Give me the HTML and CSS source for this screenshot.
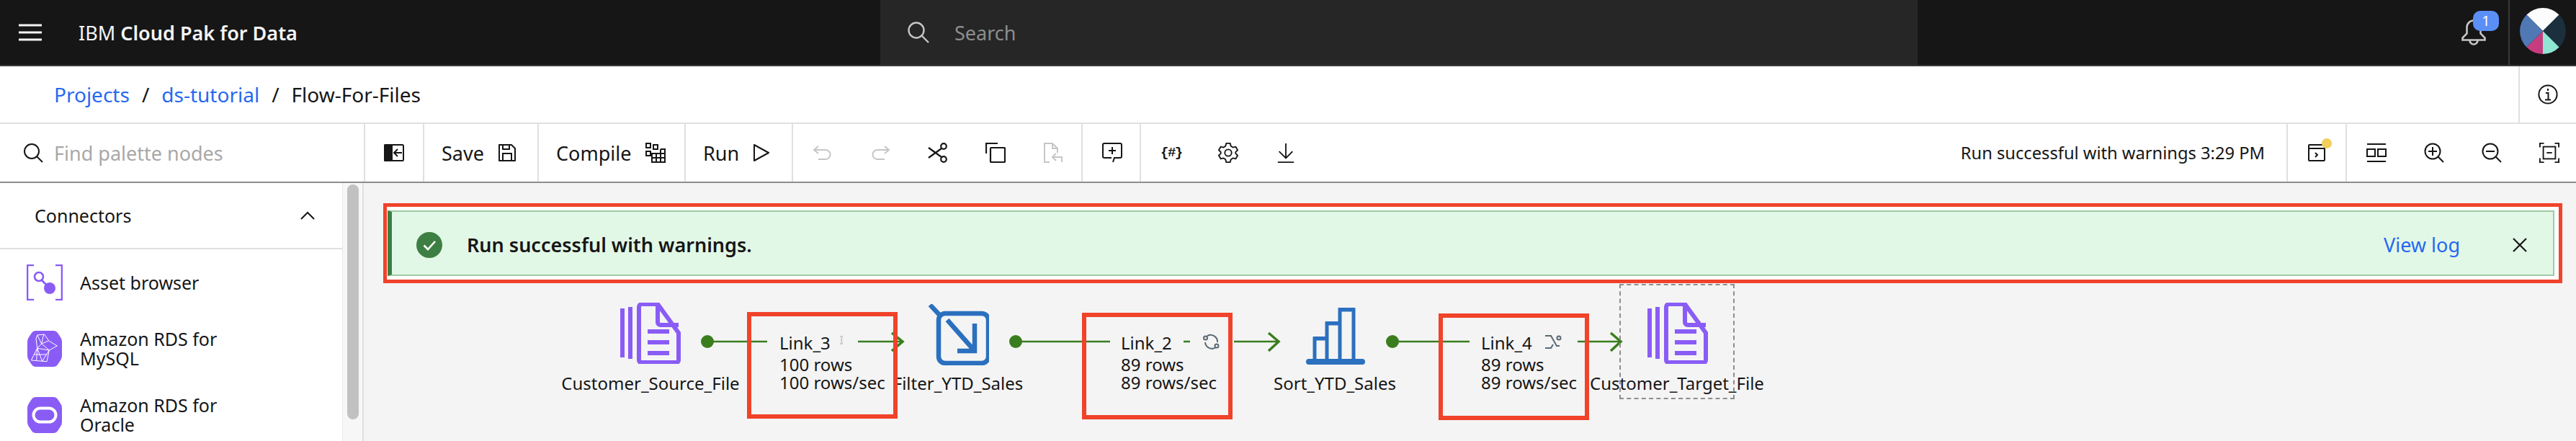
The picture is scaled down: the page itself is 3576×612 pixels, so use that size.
FILE: index.html
```html
<!DOCTYPE html>
<html lang="en">
<head>
  <meta charset="UTF-8" />
  <title>Flow-For-Files</title>
  <link rel="stylesheet" href="styles.css">
</head>
<body>
  <header class="topbar">
    <div class="brand">
      <svg class="menu-icon" viewBox="0 0 32 24"><path d="M0 2h32M0 12h32M0 22h32" stroke="#f4f4f4" stroke-width="3" fill="none"/></svg>
      <span class="brand-name">IBM <strong>Cloud Pak for Data</strong></span>
    </div>
    <div class="search">
      <svg class="search-icon" viewBox="0 0 32 32"><circle cx="13" cy="13" r="10.5" fill="none" stroke="#c6c6c6" stroke-width="2.4"/><path d="M21 21l9 9" stroke="#c6c6c6" stroke-width="2.4"/></svg>
      <span>Search</span>
    </div>
    <div class="top-right">
      <div class="bell">
        <svg class="bell-icon" viewBox="0 0 34 36"><path d="M1.500 28.500h31v-3l-6-6V11a9.500 9.500 0 0 0-19 0v8.500l-6 6z" fill="none" stroke="#c6c6c6" stroke-width="2.6"/><path d="M11.500 29a5.500 5.500 0 0 0 11 0" fill="none" stroke="#c6c6c6" stroke-width="2.6"/></svg>
        <span class="badge">1</span>
      </div>
      <div class="avatar-cell">
        <svg class="avatar" viewBox="-32 -32 64 64">
          <path d="M0 0L-22.600-22.600A32 32 0 0 1 22.600-22.600z" fill="#fcfcfc"/>
          <path d="M0 0L22.600-22.600A32 32 0 0 1 22.600 22.600z" fill="#1b2f3d"/>
          <path d="M0 0L22.600 22.600A32 32 0 0 1 0 32z" fill="#8fe6d2"/>
          <path d="M0 0L0 32A32 32 0 0 1-22.600 22.600z" fill="#c63d7f"/>
          <path d="M0 0L-22.600 22.600A32 32 0 0 1-22.600-22.600z" fill="#4f78b5"/>
        </svg>
      </div>
    </div>
  </header>

  <nav class="crumbs">
    <div class="crumb-list">
      <a>Projects</a><span class="slash">/</span><a>ds-tutorial</a><span class="slash">/</span><span>Flow-For-Files</span>
    </div>
    <div class="crumb-info">
      <svg class="icon" viewBox="0 0 28 28"><circle cx="14" cy="14" r="12.6" fill="none" stroke="#161616" stroke-width="2"/><path d="M14 6v3M11 12h3.500v9M10 21.500h8" fill="none" stroke="#161616" stroke-width="2"/></svg>
    </div>
  </nav>

  <div class="toolbar">
    <div class="find">
      <svg class="find-icon" viewBox="0 0 28 28"><circle cx="12" cy="12" r="10" fill="none" stroke="#161616" stroke-width="2"/><path d="M19 19l8 8" stroke="#161616" stroke-width="2"/></svg>
      <span>Find palette nodes</span>
    </div>
    <div class="tool-group toggle">
      <svg class="icon" viewBox="0 0 28 24"><rect x="1" y="1" width="26" height="22" rx="1.500" fill="none" stroke="#161616" stroke-width="2"/><rect x="0" y="0" width="12" height="24" rx="1.500" fill="#161616"/><path d="M25 12H15M19 7l-5 5 5 5" fill="none" stroke="#161616" stroke-width="2"/></svg>
    </div>
    <div class="tool-group labeled save">
      <span>Save</span>
      <svg class="icon" viewBox="0 0 24 24"><path d="M1 1h17l5 5v17H1z" fill="none" stroke="#161616" stroke-width="2" stroke-linejoin="round"/><path d="M6 23V13h12v10M6 1v6h9V1" fill="none" stroke="#161616" stroke-width="2"/></svg>
    </div>
    <div class="tool-group labeled compile">
      <span>Compile</span>
      <svg class="icon" viewBox="0 0 28 28"><g fill="none" stroke="#161616" stroke-width="2"><rect x="1" y="1" width="6" height="6"/><rect x="11" y="3" width="6" height="6"/><rect x="1" y="12" width="6" height="6"/><path d="M9 15h18v12H9zM9 21h18M15 15v12M21 9v18M21 9h6v6"/></g></svg>
    </div>
    <div class="tool-group labeled run">
      <span>Run</span>
      <svg class="icon" viewBox="0 0 22 24"><path d="M1 1l20 11L1 23z" fill="none" stroke="#161616" stroke-width="2" stroke-linejoin="round"/></svg>
    </div>
    <div class="tool-group icons edit">
      <svg class="icon muted" viewBox="0 0 28 24"><path d="M8 3L2 8l6 5" fill="none" stroke="#c6c6c6" stroke-width="2"/><path d="M2 8h16a6 6 0 0 1 0 13H8" fill="none" stroke="#c6c6c6" stroke-width="2"/></svg>
      <svg class="icon muted" viewBox="0 0 28 24"><path d="M20 3l6 5-6 5" fill="none" stroke="#c6c6c6" stroke-width="2"/><path d="M26 8H10a6 6 0 0 0 0 13h10" fill="none" stroke="#c6c6c6" stroke-width="2"/></svg>
      <svg class="icon" viewBox="0 0 28 28"><g fill="none" stroke="#161616" stroke-width="2.200"><circle cx="22" cy="5" r="3.800"/><circle cx="22" cy="23" r="3.800"/><path d="M19 8L1 21M19 20L1 7"/></g></svg>
      <svg class="icon" viewBox="0 0 28 28"><g fill="none" stroke="#161616" stroke-width="2.200"><rect x="7" y="7" width="20" height="20" rx="1"/><path d="M1 15V1h16"/></g></svg>
      <svg class="icon" viewBox="0 0 26 28"><g fill="none" stroke="#c6c6c6" stroke-width="2"><path d="M8 27H1V1h11l7 7v6M12 1v7h7"/><path d="M25 27v-7H13M17 15l-5 5 5 5"/></g></svg>
    </div>
    <div class="tool-group icons comment">
      <svg class="icon" viewBox="0 0 28 28"><g fill="none" stroke="#161616" stroke-width="2"><path d="M13 21H3a2 2 0 0 1-2-2V3a2 2 0 0 1 2-2h22a2 2 0 0 1 2 2v16a2 2 0 0 1-2 2h-8l-2 6"/><path d="M14 6v10M9 11h10"/></g></svg>
    </div>
    <div class="tool-group icons params">
      <span class="hash">{#}</span>
      <svg class="icon" viewBox="0 0 30 30"><g fill="none" stroke="#161616" stroke-width="2" stroke-linejoin="round"><path d="M12 1h6l1 4 3 2 4-1 3 5-3 3v2l3 3-3 5-4-1-3 2-1 4h-6l-1-4-3-2-4 1-3-5 3-3v-2L1 11l3-5 4 1 3-2z"/><circle cx="15" cy="15" r="5"/></g></svg>
      <svg class="icon" viewBox="0 0 26 30"><path d="M13 1v21M3 13l10 10 10-10M1 29h24" fill="none" stroke="#161616" stroke-width="2"/></svg>
    </div>
    <div class="status">Run successful with warnings 3:29 PM</div>
    <div class="tool-group term">
      <svg class="icon" viewBox="0 0 24 24"><g fill="none" stroke="#161616" stroke-width="2"><rect x="1" y="1" width="22" height="22" rx="1"/><path d="M1 6h22M10 12l3 3-3 3"/></g></svg>
      <span class="dot"></span>
    </div>
    <div class="tool-group icons view">
      <svg class="icon" viewBox="0 0 28 28"><g fill="none" stroke="#161616" stroke-width="2"><path d="M1 2h26M1 26h26"/><rect x="1" y="9" width="11" height="10"/><rect x="16" y="9" width="11" height="10"/></g></svg>
      <svg class="icon" viewBox="0 0 28 28"><g fill="none" stroke="#161616" stroke-width="2"><circle cx="12" cy="12" r="10.500"/><path d="M19 19l8 8M12 6v12M6 12h12"/></g></svg>
      <svg class="icon" viewBox="0 0 28 28"><g fill="none" stroke="#161616" stroke-width="2"><circle cx="12" cy="12" r="10.500"/><path d="M19 19l8 8M6 12h12"/></g></svg>
      <svg class="icon" viewBox="0 0 30 30"><g fill="none" stroke="#161616" stroke-width="2"><path d="M1 7V1h6M23 1h6v6M29 23v6h-6M7 29H1v-6"/><rect x="6" y="6" width="18" height="18"/><path d="M11 15h8"/></g></svg>
    </div>
  </div>

  <main class="workspace">
    <aside class="palette">
      <div class="palette-list">
        <div class="palette-head">
          <span>Connectors</span>
          <svg class="chevron" viewBox="0 0 20 12"><path d="M1 11l9-9 9 9" fill="none" stroke="#161616" stroke-width="2"/></svg>
        </div>
        <div class="palette-item">
          <svg class="item-icon" viewBox="0 0 50 50"><g fill="none" stroke="#8a5cf6" stroke-width="2.600"><path d="M10 1H1v48h9M40 1h9v48h-9"/><circle cx="17" cy="17" r="6"/><path d="M21 22l8 8"/></g><circle cx="32" cy="33" r="8" fill="#8a5cf6"/></svg>
          <span>Asset browser</span>
        </div>
        <div class="palette-item">
          <svg class="item-icon" viewBox="0 0 50 50"><path d="M13 0h24q4 0 6 3l4 6q2 3 2 6v20q0 3-2 6l-4 6q-2 3-6 3H13q-4 0-6-3l-4-6q-2-3-2-6V15q0-3 2-6l4-6q2-3 6-3z" fill="#8a5cf6"/><g fill="none" stroke="#fff" stroke-width="1"><path d="M14.700 6l10-1 6 9 11.600 7-11 6-3.300 15.700L6.300 41l8.400-16.700L13 11z"/><path d="M14.700 6l6 12 3-13M20.700 18l-6 6.300 16.600 2.700M20.700 18l9.600-4M20.700 18l10.600 9M14.700 24.300l7 18M14.700 24.300l-1 17M31.300 27l-9.600 15.300M10 33l18 0"/></g></svg>
          <span>Amazon RDS for MySQL</span>
        </div>
        <div class="palette-item">
          <svg class="item-icon" viewBox="0 0 50 50"><path d="M13 0h24q4 0 6 3l4 6q2 3 2 6v20q0 3-2 6l-4 6q-2 3-6 3H13q-4 0-6-3l-4-6q-2-3-2-6V15q0-3 2-6l4-6q2-3 6-3z" fill="#8a5cf6"/><rect x="9.500" y="15.500" width="31" height="19" rx="9.500" fill="none" stroke="#fff" stroke-width="4"/></svg>
          <span>Amazon RDS for Oracle</span>
        </div>
      </div>
      <div class="scroll-track"><div class="scroll-thumb"></div></div>
    </aside>

    <section class="canvas">
      <div class="notice">
        <svg class="check" viewBox="0 0 36 36"><circle cx="18" cy="18" r="18" fill="#3d7f42"/><path d="M10.500 18.500l5.500 5.500 10-11" fill="none" stroke="#fff" stroke-width="2.600"/></svg>
        <strong class="notice-text">Run successful with warnings.</strong>
        <a class="notice-link">View log</a>
        <svg class="close" viewBox="0 0 20 20"><path d="M1 1l18 18M19 1L1 19" stroke="#161616" stroke-width="2.200"/></svg>
      </div>

      <svg class="links" width="3071" height="358" viewBox="505 254 3071 358">
        <g fill="none" stroke="#3a7d1e" stroke-width="2.500">
          <path d="M982 474h83M1191 474h60M1410 474h131M1643 474h9M1713 474h60M1933 474h107M2190 474h58"/>
        </g>
        <g fill="none" stroke="#3a7d1e" stroke-width="3.500">
          <path d="M1238 462l15 12-15 13M1761 462l14 12-14 13M2236 462l14 12-14 13"/>
        </g>
        <g fill="#3a7d1e">
          <circle cx="982" cy="474" r="9"/><circle cx="1410" cy="474" r="9"/><circle cx="1933" cy="474" r="9"/>
        </g>
        <g fill="none" stroke="#c9ced2" stroke-width="2">
          <path d="M1166 467h3l-1 5 1 5h-3"/>
        </g>
        <g fill="none" stroke="#5a6872" stroke-width="2">
          <path d="M1676 466a9.500 9.500 0 0 1 14 9M1688 482a9.500 9.500 0 0 1-15-7"/>
          <circle cx="1673.500" cy="469" r="2.500"/>
          <circle cx="1689" cy="480" r="2.500"/>
          <path d="M2145 466h8l8 14h4M2145 483h8l3-5"/>
          <circle cx="2164" cy="469" r="2.500"/>
        </g>
      </svg>

      <svg class="node-icon source" viewBox="0 0 84 85"><g fill="none" stroke="#8a5cf6" stroke-width="6"><path d="M3 8v68M14 6v72"/><path d="M26 6a4 4 0 0 1 4-4h22l29 40v38a3 3 0 0 1-3 3H29a3 3 0 0 1-3-3z"/><path d="M52 3v24a4 4 0 0 0 4 4h25M38 40h30M38 55h30M38 70h30"/></g></svg>
      <div class="node-label source-label">Customer_Source_File</div>

      <svg class="node-icon filter" viewBox="0 0 84 85"><g fill="none" stroke="#2b70bf" stroke-width="6.500"><path d="M2 1l16 17"/><rect x="14" y="13" width="69" height="69" rx="9"/><path d="M26 22l38 43M64 27v41M40 65h27"/></g></svg>
      <div class="node-label filter-label">Filter_YTD_Sales</div>

      <svg class="node-icon sort" viewBox="0 0 84 80"><g fill="none" stroke="#2b70bf" stroke-width="5"><path d="M13 74V43h17v31M30 74V22h18v52M48 74V3h19v71"/></g><g fill="#2b70bf"><rect x="11" y="40" width="21" height="5"/><rect x="28" y="19" width="22" height="5"/><rect x="46" y="0" width="23" height="5"/><rect x="1" y="71" width="82" height="8" rx="4"/></g></svg>
      <div class="node-label sort-label">Sort_YTD_Sales</div>

      <svg class="node-icon target" viewBox="0 0 84 85"><g fill="none" stroke="#8a5cf6" stroke-width="6"><path d="M3 8v68M14 6v72"/><path d="M26 6a4 4 0 0 1 4-4h22l29 40v38a3 3 0 0 1-3 3H29a3 3 0 0 1-3-3z"/><path d="M52 3v24a4 4 0 0 0 4 4h25M38 40h30M38 55h30M38 70h30"/></g></svg>
      <div class="node-label target-label">Customer_Target_File</div>
      <div class="selection"></div>

      <div class="link-info link3"><span class="link-name">Link_3</span><span>100 rows</span><span>100 rows/sec</span></div>
      <div class="link-info link2"><span class="link-name">Link_2</span><span>89 rows</span><span>89 rows/sec</span></div>
      <div class="link-info link4"><span class="link-name">Link_4</span><span>89 rows</span><span>89 rows/sec</span></div>

      <div class="mark mark3"></div>
      <div class="mark mark2"></div>
      <div class="mark mark4"></div>
    </section>
  </main>
</body>
</html>
```

FILE: styles.css
```css
* {
  box-sizing: border-box;
}

html, body {
  margin: 0;
  height: 612px;
  overflow: hidden;
}

body {
  font-family: "Noto Sans", sans-serif;
  font-size: 27px;
  color: #161616;
  background: #fff;
  display: flex;
  flex-direction: column;
}

svg {
  display: block;
}

/* top bar */
.topbar {
  height: 92px;
  flex: none;
  display: flex;
  background: #161616;
  border-bottom: 2px solid #393939;
  color: #f4f4f4;
}

.brand {
  width: 1222px;
  display: flex;
  align-items: center;
  padding-left: 26px;
}

.menu-icon {
  width: 32px;
  height: 24px;
  margin-right: 51px;
}

.brand-name strong {
  font-weight: 600;
}

.search {
  width: 1440px;
  background: #262626;
  display: flex;
  align-items: center;
  padding-left: 37px;
  color: #8d8d8d;
}

.search-icon {
  width: 32px;
  height: 32px;
  margin-right: 34px;
}

.top-right {
  flex: 1;
  display: flex;
  justify-content: flex-end;
}

.bell {
  position: relative;
  width: 65px;
}

.bell-icon {
  position: absolute;
  left: 0;
  top: 27px;
  width: 34px;
  height: 36px;
}

.badge {
  position: absolute;
  left: 16px;
  top: 15px;
  width: 36px;
  height: 28px;
  border-radius: 10px;
  background: #5a8ff5;
  color: #fff;
  font-size: 20px;
  line-height: 28px;
  text-align: center;
}

.avatar-cell {
  width: 94px;
  border-left: 2px solid #393939;
  padding: 11px 0 0 14px;
}

.avatar {
  width: 64px;
  height: 64px;
}

/* breadcrumb */
.crumbs {
  height: 78px;
  flex: none;
  display: flex;
  justify-content: space-between;
}

.crumb-list {
  display: flex;
  align-items: center;
  padding-left: 75px;
  font-size: 28px;
}

.crumb-list a {
  color: #2768f0;
}

.slash {
  margin: 0 17px;
}

.crumb-info {
  width: 80px;
  border-left: 2px solid #e0e0e0;
  display: flex;
  align-items: center;
  justify-content: center;
}

/* toolbar */
.toolbar {
  height: 84px;
  flex: none;
  display: flex;
  align-items: stretch;
  border-top: 2px solid #e0e0e0;
  border-bottom: 2px solid #8d8d8d;
}

.icon {
  width: 28px;
  height: 28px;
  flex: none;
}

.find {
  width: 505px;
  display: flex;
  align-items: center;
  padding-left: 32px;
  color: #a8a8a8;
}

.find-icon {
  width: 28px;
  height: 28px;
  margin-right: 15px;
}

.tool-group {
  border-left: 2px solid #e0e0e0;
  display: flex;
  align-items: center;
  flex: none;
}

.toggle {
  width: 82px;
  justify-content: center;
}

.labeled {
  gap: 20px;
  padding-left: 24px;
}

.save {
  width: 159px;
}

.save .icon {
  width: 24px;
  height: 24px;
}

.compile {
  width: 204px;
}

.run {
  width: 149px;
}

.run .icon {
  width: 22px;
  height: 24px;
}

.icons {
  gap: 52px;
  padding-left: 27px;
}

.edit {
  width: 402px;
}

.comment {
  width: 81px;
}

.params {
  width: 243px;
}

.hash {
  width: 28px;
  flex: none;
  font-family: "Liberation Mono", monospace;
  font-weight: 700;
  font-size: 19px;
  letter-spacing: -1.500px;
  text-align: center;
}

.status {
  flex: 1;
  display: flex;
  align-items: center;
  justify-content: flex-end;
  padding-right: 30px;
  font-size: 23.700px;
}

.term {
  position: relative;
  width: 82px;
  padding-left: 28px;
}

.term .icon {
  width: 24px;
  height: 24px;
}

.dot {
  position: absolute;
  left: 47px;
  top: 20px;
  width: 14px;
  height: 14px;
  border-radius: 50%;
  background: #f1cf5a;
}

.view {
  width: 320px;
}

/* palette */
.workspace {
  flex: 1;
  display: flex;
  min-height: 0;
}

.palette {
  width: 505px;
  flex: none;
  display: flex;
  border-right: 2px solid #e0e0e0;
  font-size: 25px;
}

.palette-list {
  width: 475px;
  flex: none;
  overflow: hidden;
}

.palette-head {
  height: 92px;
  display: flex;
  align-items: center;
  justify-content: space-between;
  padding: 0 38px 0 48px;
  border-bottom: 2px solid #e0e0e0;
}

.chevron {
  width: 20px;
  height: 12px;
}

.palette-item {
  display: flex;
  align-items: center;
  height: 92px;
  padding-left: 37px;
  padding-right: 120px;
  line-height: 27px;
}

.item-icon {
  width: 50px;
  height: 50px;
  flex: none;
  margin-right: 24px;
}

.scroll-track {
  flex: 1;
  background: #f7f7f7;
  border-left: 1px solid #e8e8e8;
  padding: 2px 5px 0 6px;
}

.scroll-thumb {
  height: 326px;
  background: #c1c1c1;
  border-radius: 8px;
}

/* canvas */
.canvas {
  flex: 1;
  position: relative;
  background: #f4f4f4;
}

.notice {
  position: absolute;
  left: 27px;
  top: 28px;
  width: 3025px;
  height: 111px;
  background: #fff;
  border: 5px solid #f0432a;
  padding: 8px 5px 4px;
  display: flex;
  align-items: center;
}

.notice::before {
  content: "";
  position: absolute;
  inset: 5px 6px 5px 1px;
  background: #e2f8e6;
  border: 2px solid #9fc9a4;
  border-left: 6px solid #3d7f42;
}

.check, .notice-text, .notice-link, .close {
  position: relative;
}

.check {
  width: 36px;
  height: 36px;
  margin-left: 36px;
}

.notice-text {
  margin-left: 34px;
  flex: 1;
  font-weight: 600;
}

.notice-link {
  color: #2768f0;
}

.close {
  width: 20px;
  height: 20px;
  margin: 0 39px 0 73px;
}

.links {
  position: absolute;
  left: 0;
  top: 0;
}

.node-icon {
  position: absolute;
}

.source {
  left: 356px;
  top: 166px;
  width: 84px;
  height: 85px;
}

.filter {
  left: 784px;
  top: 168px;
  width: 84px;
  height: 85px;
}

.sort {
  left: 1307px;
  top: 173px;
  width: 84px;
  height: 80px;
}

.target {
  left: 1782px;
  top: 166px;
  width: 84px;
  height: 85px;
}

.node-label {
  position: absolute;
  top: 263px;
  width: 300px;
  margin-left: -150px;
  text-align: center;
  font-size: 24px;
  line-height: 30px;
}

.source-label {
  left: 398px;
}

.filter-label {
  left: 825px;
}

.sort-label {
  left: 1348px;
}

.target-label {
  left: 1823px;
}

.selection {
  position: absolute;
  left: 1743px;
  top: 140px;
  width: 160px;
  height: 160px;
  border: 2px dashed #8d8d8d;
}

.link-info {
  position: absolute;
  top: 209px;
  display: flex;
  flex-direction: column;
  font-size: 24px;
  line-height: 25px;
}

.link-name {
  margin-bottom: 5px;
}

.link3 {
  left: 577px;
}

.link2 {
  left: 1051px;
}

.link4 {
  left: 1551px;
}

.mark {
  position: absolute;
  width: 209px;
  height: 148px;
  border: 6px solid #f0432a;
}

.mark3 {
  left: 532px;
  top: 179px;
}

.mark2 {
  left: 997px;
  top: 180px;
}

.mark4 {
  left: 1492px;
  top: 181px;
}
```
